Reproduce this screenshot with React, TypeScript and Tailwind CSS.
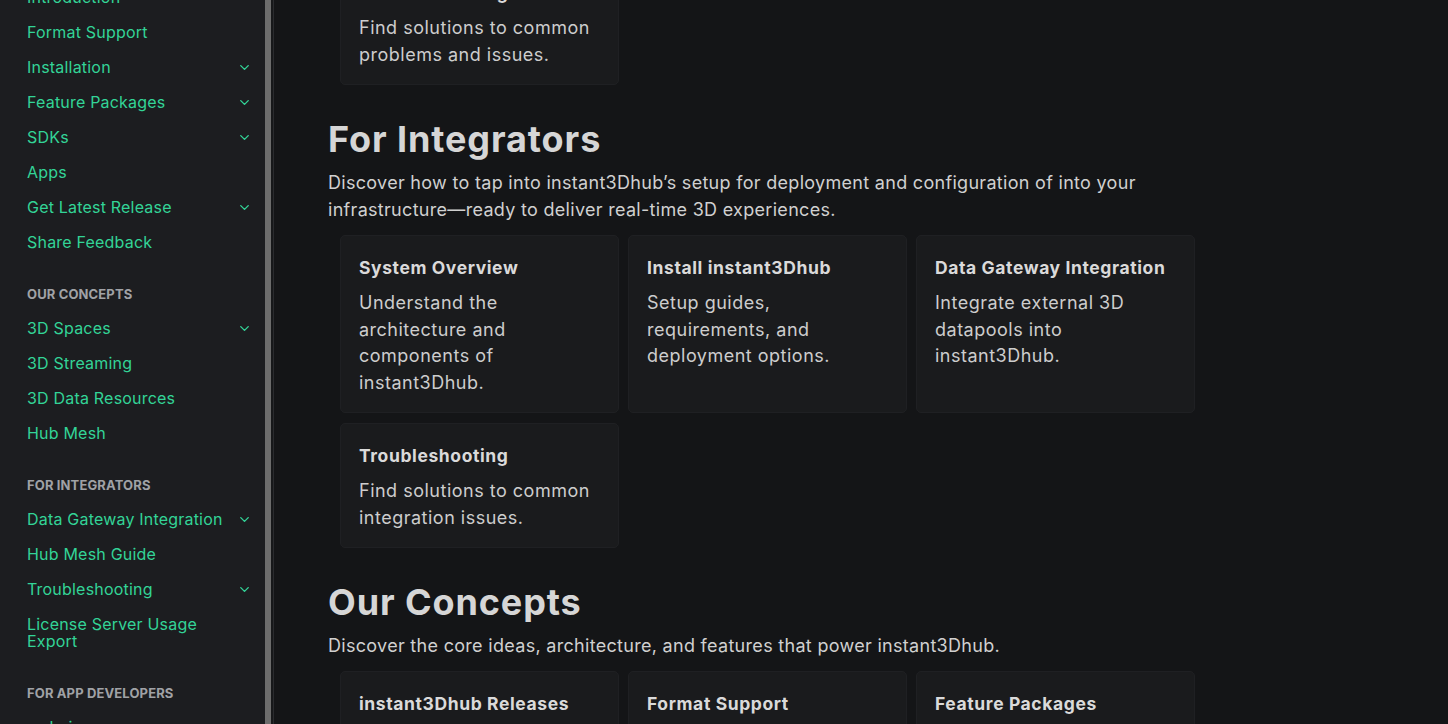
import { ChevronDown } from "lucide-react";

type NavItem = { label: string; sub?: boolean };
type NavGroup = { title?: string; items: NavItem[] };

const nav: NavGroup[] = [
  {
    items: [
      { label: "Introduction" },
      { label: "Format Support" },
      { label: "Installation", sub: true },
      { label: "Feature Packages", sub: true },
      { label: "SDKs", sub: true },
      { label: "Apps" },
      { label: "Get Latest Release", sub: true },
      { label: "Share Feedback" },
    ],
  },
  {
    title: "Our Concepts",
    items: [
      { label: "3D Spaces", sub: true },
      { label: "3D Streaming" },
      { label: "3D Data Resources" },
      { label: "Hub Mesh" },
    ],
  },
  {
    title: "For Integrators",
    items: [
      { label: "Data Gateway Integration", sub: true },
      { label: "Hub Mesh Guide" },
      { label: "Troubleshooting", sub: true },
      { label: "License Server Usage Export" },
    ],
  },
  {
    title: "For App Developers",
    items: [{ label: "webvis", sub: true }],
  },
];

type Card = { title: string; text: string };

const integrators: Card[] = [
  { title: "System Overview", text: "Understand the architecture and components of instant3Dhub." },
  { title: "Install instant3Dhub", text: "Setup guides, requirements, and deployment options." },
  { title: "Data Gateway Integration", text: "Integrate external 3D datapools into instant3Dhub." },
  { title: "Troubleshooting", text: "Find solutions to common integration issues." },
];

const concepts: Card[] = [
  { title: "instant3Dhub Releases", text: "Browse release notes and version history." },
  { title: "Format Support", text: "See which 3D file formats are supported." },
  { title: "Feature Packages", text: "Learn about the available feature packages." },
];

function Sidebar() {
  return (
    <aside className="w-[265px] shrink-0 overflow-hidden bg-[#1c1d20]">
      <div className="-mt-[20px]">
        {nav.map((group, gi) => (
          <div key={gi}>
            {group.title && (
              <div className="px-[27px] pt-[26px] pb-[8px] text-[13px] leading-[17px] font-bold uppercase tracking-[0.01em] text-[#a0a2a6]">
                {group.title}
              </div>
            )}
            {group.items.map((item) => (
              <div key={item.label} className="flex items-start justify-between gap-2 pl-[27px] pr-[13px] py-[9px]">
                <span className="max-w-[200px] text-[16px] leading-[17px] tracking-[0.2px] text-[#33d497]">{item.label}</span>
                {item.sub && <ChevronDown size={15} strokeWidth={2.2} className="mt-[1px] shrink-0 text-[#33d497]" aria-hidden />}
              </div>
            ))}
          </div>
        ))}
      </div>
    </aside>
  );
}

function CardGrid({ cards }: { cards: Card[] }) {
  return (
    <div className="ml-[12px] grid w-[855px] grid-cols-3 gap-x-[9px] gap-y-[10px]">
      {cards.map((c) => (
        <div key={c.title} className="rounded-[5px] border border-[#1f2023] bg-[#1a1b1d] px-[18px] pt-[20px] pb-[16px]">
          <h3 className="text-[17.5px] leading-[24px] font-bold tracking-[0.6px] text-[#dadada]">{c.title}</h3>
          <p className="mt-[10px] text-[18px] leading-[26.5px] tracking-[0.5px] text-[#cdcdcd]">{c.text}</p>
        </div>
      ))}
    </div>
  );
}

function Section({ title, intro, cards }: { title: string; intro: string; cards: Card[] }) {
  return (
    <section className="mt-[33px]">
      <h2 className="text-[36px] leading-[42px] font-bold tracking-[0.9px] text-[#d6d6d6]">{title}</h2>
      <p className="mt-[8.5px] mb-[12.5px] text-[18px] leading-[27px] tracking-[0.3px] text-[#d0d0d0]">{intro}</p>
      <CardGrid cards={cards} />
    </section>
  );
}

export default function App() {
  return (
    <div className="flex h-[724px] w-full overflow-hidden bg-[#141517] font-['Inter',sans-serif]">
      <Sidebar />
      <div className="w-[6px] shrink-0 bg-[#6c6c6c]" />
      <div className="w-[2px] shrink-0 bg-[#17181a]" />
      <div className="w-px shrink-0 bg-[#2a2b2e]" />
      <main className="flex-1 overflow-hidden pl-[54px]">
        <div className="-mt-[40px] w-[867px]">
          <CardGrid cards={[{ title: "Troubleshooting", text: "Find solutions to common problems and issues." }]} />
          <Section
            title="For Integrators"
            intro="Discover how to tap into instant3Dhub’s setup for deployment and configuration of into your infrastructure—ready to deliver real-time 3D experiences."
            cards={integrators}
          />
          <Section
            title="Our Concepts"
            intro="Discover the core ideas, architecture, and features that power instant3Dhub."
            cards={concepts}
          />
        </div>
      </main>
    </div>
  );
}
